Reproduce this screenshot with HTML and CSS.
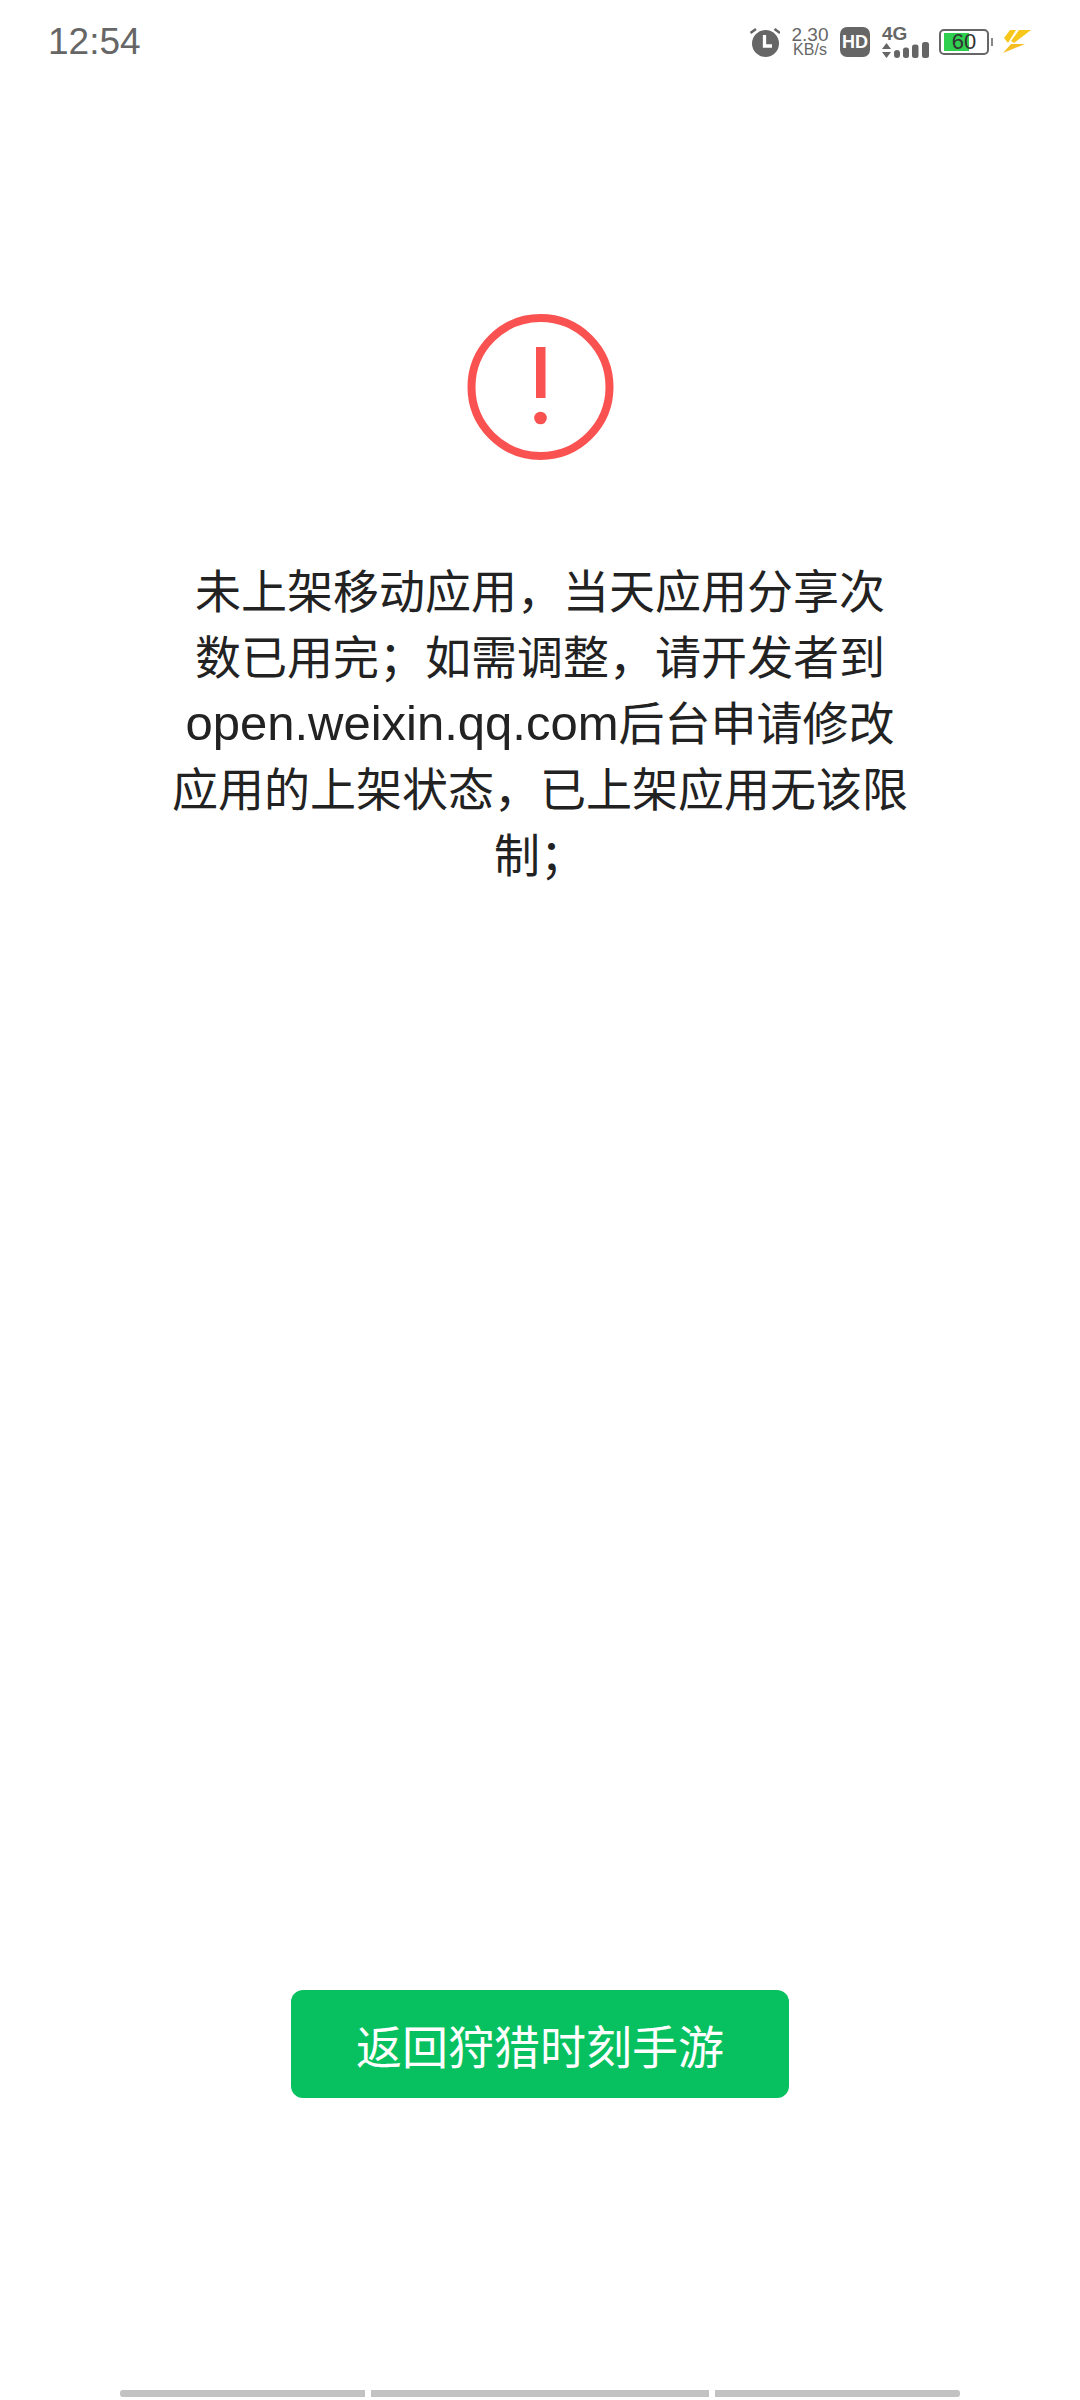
FILE: index.html
```html
<!DOCTYPE html>
<html lang="zh-CN">

<head>
    <meta charset="UTF-8">
    <meta name="viewport" content="width=device-width, initial-scale=1.0">
    <title>提示</title>
    <link rel="stylesheet" href="styles.css">
</head>

<body>
    <div class="status-bar">
        <span class="time">12:54</span>
        <div class="status-icons">
            <svg class="alarm" width="30" height="30" viewBox="0 0 30 30">
                <circle cx="15.500" cy="16.500" r="13.500" fill="#666"/>
                <path d="M14.500 8v11h7.500" fill="none" stroke="#fff" stroke-width="3.300"/>
                <path d="M0.500 6l5.500-4M30 6l-5.500-4" fill="none" stroke="#666" stroke-width="2.500"/>
            </svg>
            <div class="speed">
                <span class="speed-value">2.30</span>
                <span class="speed-unit">KB/s</span>
            </div>
            <span class="hd">HD</span>
            <div class="signal">
                <span class="signal-type">4G</span>
                <svg width="47" height="16" viewBox="0 0 47 16">
                    <path d="M0 7l4.500-6 4.500 6zM0 10h9l-4.500 6z" fill="#666"/>
                    <rect x="12" y="8" width="6" height="8" rx="3" fill="#666"/>
                    <rect x="21" y="5.500" width="6" height="10.500" rx="2.500" fill="#666"/>
                    <rect x="30" y="2.500" width="6.500" height="13.500" rx="2.500" fill="#666"/>
                    <rect x="40" y="0" width="7" height="16" rx="2.500" fill="#666"/>
                </svg>
            </div>
            <div class="battery">
                <div class="battery-body">
                    <div class="battery-fill"></div>
                    <span class="battery-level">60</span>
                </div>
                <div class="battery-tip"></div>
            </div>
            <svg class="bolt" width="29" height="24" viewBox="0 0 29 24">
                <path d="M7 0h6L5 13 1 8z" fill="#f7c81b"/>
                <path d="M16 0h12L11 13 8 11z" fill="#f7c81b"/>
                <path d="M8 14h14L0 23z" fill="#f5bd1f"/>
            </svg>
        </div>
    </div>

    <div class="content">
        <svg class="warn-icon" width="148" height="148" viewBox="0 0 148 148">
            <circle cx="74.500" cy="74" r="69" fill="none" stroke="#fa5151" stroke-width="8"/>
            <rect x="70" y="34" width="9.500" height="51" fill="#fa5151"/>
            <circle cx="74.500" cy="105" r="6.300" fill="#fa5151"/>
        </svg>
        <p class="message">未上架移动应用，当天应用分享次<br>数已用完；如需调整，请开发者到<br><span class="url">open.weixin.qq.com</span>后台申请修改<br>应用的上架状态，已上架应用无该限<br>制；</p>
    </div>

    <button class="back-btn">返回狩猎时刻手游</button>

    <div class="nav-bar">
        <div class="nav-seg nav-seg-left"></div>
        <div class="nav-seg nav-seg-mid"></div>
        <div class="nav-seg nav-seg-right"></div>
    </div>
</body>

</html>
```

FILE: styles.css
```css
* {
    box-sizing: border-box;
    margin: 0;
    padding: 0;
}

body {
    width: 1080px;
    height: 2400px;
    background-color: #fff;
    font-family: "Liberation Sans", "Noto Sans CJK SC", sans-serif;
    display: flex;
    flex-direction: column;
    align-items: center;
    overflow: hidden;
}

.status-bar {
    width: 100%;
    height: 84px;
    padding: 0 48px 0 48px;
    display: flex;
    align-items: center;
    justify-content: space-between;
    color: #666;
}

.time {
    font-size: 37px;
}

.status-icons {
    display: flex;
    align-items: center;
}

.alarm {
    margin-right: 12px;
}

.speed {
    display: flex;
    flex-direction: column;
    align-items: center;
    width: 36px;
    line-height: 15px;
    margin-right: 12px;
}

.speed-value {
    font-size: 19px;
}

.speed-unit {
    font-size: 16px;
}

.hd {
    width: 30px;
    height: 30px;
    border-radius: 7px;
    background-color: #666;
    color: #fff;
    font-size: 18px;
    font-weight: bold;
    line-height: 30px;
    text-align: center;
    margin-right: 12px;
}

.signal {
    display: flex;
    flex-direction: column;
    width: 47px;
    margin-right: 10px;
}

.signal-type {
    font-size: 19px;
    font-weight: bold;
    line-height: 16px;
}

.battery {
    display: flex;
    align-items: center;
    margin-right: 10px;
}

.battery-body {
    position: relative;
    width: 50px;
    height: 26px;
    border: 2px solid #666;
    border-radius: 5px;
    display: flex;
    align-items: center;
    justify-content: center;
}

.battery-fill {
    position: absolute;
    left: 3px;
    top: 2px;
    bottom: 2px;
    width: 25px;
    background-color: #2fd04f;
}

.battery-level {
    position: relative;
    font-size: 22px;
    color: #333;
}

.battery-tip {
    width: 2px;
    height: 8px;
    margin-left: 2px;
    background-color: #888;
}

.content {
    display: flex;
    flex-direction: column;
    align-items: center;
    padding-top: 229px;
}

.message {
    width: 800px;
    margin-top: 98px;
    font-size: 46px;
    line-height: 66px;
    text-align: center;
    color: #222;
}

.url {
    font-size: 49px;
    line-height: 1;
}

.back-btn {
    width: 498px;
    height: 108px;
    margin-top: auto;
    margin-bottom: 302px;
    border: none;
    border-radius: 12px;
    background-color: #07c160;
    color: #fff;
    font-family: inherit;
    font-size: 46px;
}

.nav-bar {
    position: absolute;
    left: 120px;
    bottom: 3px;
    width: 840px;
    height: 7px;
    display: flex;
    gap: 6px;
}

.nav-seg {
    background-color: #c2c2c2;
}

.nav-seg-left {
    width: 245px;
    border-radius: 3px 0 0 3px;
}

.nav-seg-mid {
    width: 338px;
}

.nav-seg-right {
    width: 245px;
    border-radius: 0 3px 3px 0;
}
```
